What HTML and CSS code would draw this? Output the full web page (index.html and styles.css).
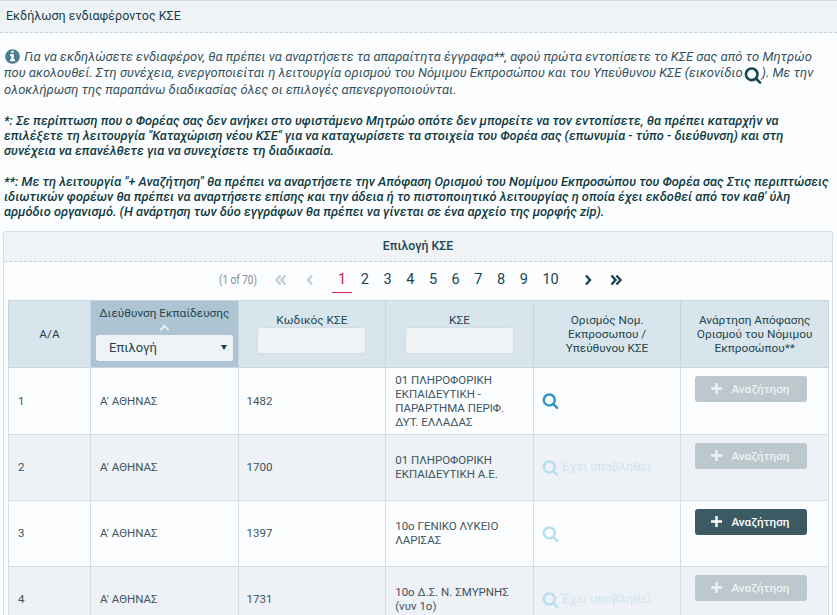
FILE: index.html
```
<!DOCTYPE html>
<html lang="el">
<head>
<meta charset="utf-8">
<title>Εκδήλωση ενδιαφέροντος ΚΣΕ</title>
<link rel="stylesheet" href="styles.css">
</head>
<body>
<svg class="defs" width="0" height="0" aria-hidden="true">
<symbol id="i-search" viewBox="0 0 1792 1792"><path d="M1216 832q0-185-131.5-316.5t-316.5-131.5-316.5 131.5-131.5 316.5 131.5 316.5 316.5 131.5 316.5-131.5 131.5-316.5zm512 832q0 52-38 90t-90 38q-54 0-90-38l-343-342q-179 124-399 124-143 0-273.5-55.5t-225-150-150-225-55.5-273.5 55.5-273.5 150-225 225-150 273.5-55.5 273.5 55.5 225 150 150 225 55.5 273.5q0 220-124 399l343 343q37 37 37 90z"/></symbol>
<symbol id="i-info" viewBox="0 0 1792 1792"><path d="M1152 1376v-160q0-14-9-23t-23-9h-96v-512q0-14-9-23t-23-9h-320q-14 0-23 9t-9 23v160q0 14 9 23t23 9h96v320h-96q-14 0-23 9t-9 23v160q0 14 9 23t23 9h448q14 0 23-9t9-23zm-128-896v-160q0-14-9-23t-23-9h-192q-14 0-23 9t-9 23v160q0 14 9 23t23 9h192q14 0 23-9t9-23zm640 416q0 209-103 385.5t-279.5 279.5-385.5 103-385.5-103-279.5-279.5-103-385.5 103-385.5 279.5-279.5 385.5-103 385.5 103 279.5 279.5 103 385.5z"/></symbol>
<symbol id="i-plus" viewBox="0 0 10 10"><path d="M3.9 0h2.2v3.900H10v2.200H6.100V10H3.900V6.100H0V3.900h3.900z"/></symbol>
<symbol id="i-first" viewBox="0 0 14 12"><path d="M6.500 1.500 2.500 6l4 4.500M11.500 1.500 7.500 6l4 4.500"/></symbol>
<symbol id="i-prev" viewBox="0 0 14 12"><path d="M9 1.500 5 6l4 4.500"/></symbol>
<symbol id="i-next" viewBox="0 0 14 12"><path d="M5 1.500 9 6l-4 4.500"/></symbol>
<symbol id="i-last" viewBox="0 0 14 12"><path d="M2.500 1.500 6.500 6l-4 4.500M7.500 1.500 11.500 6l-4 4.500"/></symbol>
</svg>

<header class="page-title">Εκδήλωση ενδιαφέροντος ΚΣΕ</header>

<section class="notes">
<p class="note lead"><svg class="info"><use href="#i-info"/></svg> Για να εκδηλώσετε ενδιαφέρον, θα πρέπει να αναρτήσετε τα απαραίτητα έγγραφα**, αφού πρώτα εντοπίσετε το ΚΣΕ σας από το Μητρώο που ακολουθεί. Στη συνέχεια, ενεργοποιείται η λειτουργία ορισμού του Νόμιμου Εκπροσώπου και του Υπεύθυνου ΚΣΕ (εικονίδιο<svg class="inline-search"><use href="#i-search"/></svg>). Με την ολοκλήρωση της παραπάνω διαδικασίας όλες οι επιλογές απενεργοποιούνται.</p>
<p class="note strong">*: Σε περίπτωση που ο Φορέας σας δεν ανήκει στο υφιστάμενο Μητρώο οπότε δεν μπορείτε να τον εντοπίσετε, θα πρέπει καταρχήν να επιλέξετε τη λειτουργία "Καταχώριση νέου ΚΣΕ" για να καταχωρίσετε τα στοιχεία του Φορέα σας (επωνυμία - τύπο - διεύθυνση) και στη συνέχεια να επανέλθετε για να συνεχίσετε τη διαδικασία.</p>
<p class="note strong">**: Με τη λειτουργία "+ Αναζήτηση" θα πρέπει να αναρτήσετε την Απόφαση Ορισμού του Νομίμου Εκπροσώπου του Φορέα σας Στις περιπτώσεις ιδιωτικών φορέων θα πρέπει να αναρτήσετε επίσης και την άδεια ή το πιστοποιητικό λειτουργίας η οποία έχει εκδοθεί από τον καθ' ύλη αρμόδιο οργανισμό. (Η ανάρτηση των δύο εγγράφων θα πρέπει να γίνεται σε ένα αρχείο της μορφής zip).</p>
</section>

<section class="card">
<h2 class="card-title">Επιλογή ΚΣΕ</h2>
<nav class="pager">
<span class="pager-count">(1 of 70)</span>
<svg class="arrow muted first"><use href="#i-first"/></svg>
<svg class="arrow muted prev"><use href="#i-prev"/></svg>
<span class="pages">
<a class="page active">1</a><a class="page">2</a><a class="page">3</a><a class="page">4</a><a class="page">5</a><a class="page">6</a><a class="page">7</a><a class="page">8</a><a class="page">9</a><a class="page wide">10</a>
</span>
<svg class="arrow next"><use href="#i-next"/></svg>
<svg class="arrow last"><use href="#i-last"/></svg>
</nav>
<table class="grid">
<colgroup><col class="c-aa"><col class="c-col"><col class="c-col"><col class="c-col"><col class="c-col"><col class="c-col"></colgroup>
<thead>
<tr>
<th>Α/Α</th>
<th class="sorted"><span class="th-label">Διεύθυνση Εκπαίδευσης</span><span class="caret"></span><span class="select"><span>Επιλογή</span><span class="select-arrow"></span></span></th>
<th><span class="th-label">Κωδικός ΚΣΕ</span><input class="filter" type="text"></th>
<th><span class="th-label">ΚΣΕ</span><input class="filter" type="text"></th>
<th>Ορισμός Νομ. Εκπροσωπου / Υπεύθυνου ΚΣΕ</th>
<th>Ανάρτηση Απόφασης Ορισμού του Νόμιμου Εκπροσώπου**</th>
</tr>
</thead>
<tbody>
<tr>
<td>1</td><td>Α' ΑΘΗΝΑΣ</td><td>1482</td><td>01 ΠΛΗΡΟΦΟΡΙΚΗ ΕΚΠΑΙΔΕΥΤΙΚΗ - ΠΑΡΑΡΤΗΜΑ ΠΕΡΙΦ. ΔΥΤ. ΕΛΛΑΔΑΣ</td>
<td><svg class="s-icon on"><use href="#i-search"/></svg></td>
<td class="action"><button class="btn" disabled><svg class="plus"><use href="#i-plus"/></svg>Αναζήτηση</button></td>
</tr>
<tr class="alt">
<td>2</td><td>Α' ΑΘΗΝΑΣ</td><td>1700</td><td>01 ΠΛΗΡΟΦΟΡΙΚΗ ΕΚΠΑΙΔΕΥΤΙΚΗ Α.Ε.</td>
<td class="submitted"><svg class="s-icon"><use href="#i-search"/></svg>Έχει υποβληθεί</td>
<td class="action"><button class="btn" disabled><svg class="plus"><use href="#i-plus"/></svg>Αναζήτηση</button></td>
</tr>
<tr>
<td>3</td><td>Α' ΑΘΗΝΑΣ</td><td>1397</td><td>10ο ΓΕΝΙΚΟ ΛΥΚΕΙΟ ΛΑΡΙΣΑΣ</td>
<td><svg class="s-icon"><use href="#i-search"/></svg></td>
<td class="action"><button class="btn live"><svg class="plus"><use href="#i-plus"/></svg>Αναζήτηση</button></td>
</tr>
<tr class="alt">
<td>4</td><td>Α' ΑΘΗΝΑΣ</td><td>1731</td><td>10ο Δ.Σ. Ν. ΣΜΥΡΝΗΣ (νυν 1ο)</td>
<td class="submitted"><svg class="s-icon"><use href="#i-search"/></svg>Έχει υποβληθεί</td>
<td class="action"><button class="btn" disabled><svg class="plus"><use href="#i-plus"/></svg>Αναζήτηση</button></td>
</tr>
</tbody>
</table>
</section>
</body>
</html>
```

FILE: styles.css
```
* { box-sizing: border-box; }
html, body { height: 615px; overflow: hidden; }
body {
  margin: 0;
  background: #fcfdfe;
  font-family: Roboto, "Noto Sans", sans-serif;
  font-size: 12px;
  color: #1f4650;
}
.defs { position: absolute; }
.page-title {
  height: 33px;
  padding: 7px 6px 0;
  background: #eff3f6;
  border-top: 1px solid #d3dde3;
  border-bottom: 1px dashed #c9d2d8;
  font-size: 12.500px;
  line-height: 15px;
  color: #17404d;
}
.notes { padding: 16px 5px 0 4px; }
.note {
  margin: 0 0 15px;
  font-style: italic;
  font-size: 13px;
  line-height: 15.300px;
  color: #35525d;
}
.note.lead { line-height: 16.300px; }
.note:last-child { margin-bottom: 0; }
.note.strong { font-size: 12.850px; font-weight: 500; color: #0f3a42; }
.info { width: 17px; height: 17px; margin: -3px 0; fill: #4a7f90; vertical-align: -1px; }
.inline-search { width: 18px; height: 18px; margin: -4px 0 -4px 1px; fill: #174552; vertical-align: -3px; }
.card {
  margin: 11px 4px 0 3px;
  border: 1px solid #d3dde3;
  border-radius: 3px 3px 0 0;
}
.card-title {
  margin: 0;
  height: 30px;
  background: #eff3f6;
  border-bottom: 1px dashed #c9d2d8;
  font-size: 12.300px;
  font-weight: 500;
  line-height: 29px;
  text-align: center;
  color: #1f4650;
}
.pager {
  display: flex;
  align-items: center;
  height: 38px;
  padding-left: 215px;
  background: #fcfdfe;
}
.pager-count {
  width: 46px;
  margin-bottom: 2px;
  font-size: 13px;
  color: #7f8c92;
  white-space: nowrap;
  transform: scaleX(0.77);
  transform-origin: left center;
}
.arrow {
  width: 14px;
  height: 12px;
  margin-bottom: 2px;
  fill: none;
  stroke: #174552;
  stroke-width: 2.400;
}
.arrow.muted { stroke: #c3ced4; }
.arrow.first { margin-left: 9px; margin-right: 15px; }
.arrow.prev { margin-right: 15px; }
.arrow.next { margin-left: 14.500px; margin-right: 14.500px; }
.pages { display: flex; }
.page {
  display: block;
  width: 22.700px;
  height: 24px;
  line-height: 22px;
  text-align: center;
  font-size: 14.500px;
  color: #174552;
  border-bottom: 1px solid transparent;
}
.page:first-child { width: 20px; margin-right: 1.600px; }
.page.wide { width: 31px; }
.page.active { color: #d2244f; border-bottom-color: #d2244f; }
.grid {
  width: 820.500px;
  margin-left: 4px;
  border-collapse: collapse;
  table-layout: fixed;
}
.c-aa { width: 82px; }
.c-col { width: 147.600px; }
.grid th {
  height: 67px;
  padding: 0 8px;
  background: #d9e5ec;
  border: 1px solid #c6d5de;
  font-size: 11.800px;
  font-weight: 400;
  line-height: 14px;
  text-align: center;
  color: #1f4650;
}
.grid th.sorted { background: #adc5d2; padding: 0 5px 6px; vertical-align: bottom; }
.th-label { display: block; white-space: nowrap; }
.caret {
  display: block;
  width: 7px;
  height: 7px;
  margin: 6px auto 2px;
  border-left: 2px solid #e3edf2;
  border-top: 2px solid #e3edf2;
  transform: rotate(45deg);
}
.select {
  display: flex;
  justify-content: space-between;
  align-items: center;
  height: 26px;
  padding: 0 6px 0 13px;
  background: #eff3f6;
  border-radius: 3px;
  font-size: 13px;
}
.select-arrow {
  width: 0;
  height: 0;
  border-left: 3px solid transparent;
  border-right: 3px solid transparent;
  border-top: 5px solid #174552;
}
.filter {
  display: block;
  width: 109px;
  height: 27px;
  margin: 0 auto;
  background: #eff3f6;
  border: 1px solid #d3dde3;
  border-radius: 3px;
}
.grid td {
  height: 66px;
  padding: 0 9px;
  border: 1px solid #d3dde3;
  font-size: 11.500px;
  line-height: 14px;
  color: #3c5560;
  vertical-align: middle;
}
.grid tbody tr:first-child td { height: 67px; }
.grid td:nth-child(3) { padding-left: 8px; }
.grid td:nth-child(4) { padding-left: 9px; }
.grid td:nth-child(5) { padding-left: 8px; }
.grid tr.alt td { background: #eef1f5; }
.grid td.action { vertical-align: top; padding: 8px 14px 0; }
.s-icon { width: 17px; height: 17px; margin-right: 3px; fill: #b5deef; vertical-align: middle; }
.s-icon.on { fill: #3196c4; }
.grid td.submitted { color: #cfe6f2; font-size: 12.500px; white-space: nowrap; }
.btn {
  display: flex;
  align-items: center;
  width: 112px;
  height: 26px;
  padding: 0 0 0 16px;
  border: 0;
  border-radius: 3px;
  background: #bcc8cd;
  color: #edf2f4;
  font-family: Roboto, sans-serif;
  font-size: 11.700px;
  font-weight: 500;
}
.btn.live { background: #3b5a64; color: #fff; }
.plus { width: 11px; height: 11px; fill: currentColor; margin-right: 9px; }
```
